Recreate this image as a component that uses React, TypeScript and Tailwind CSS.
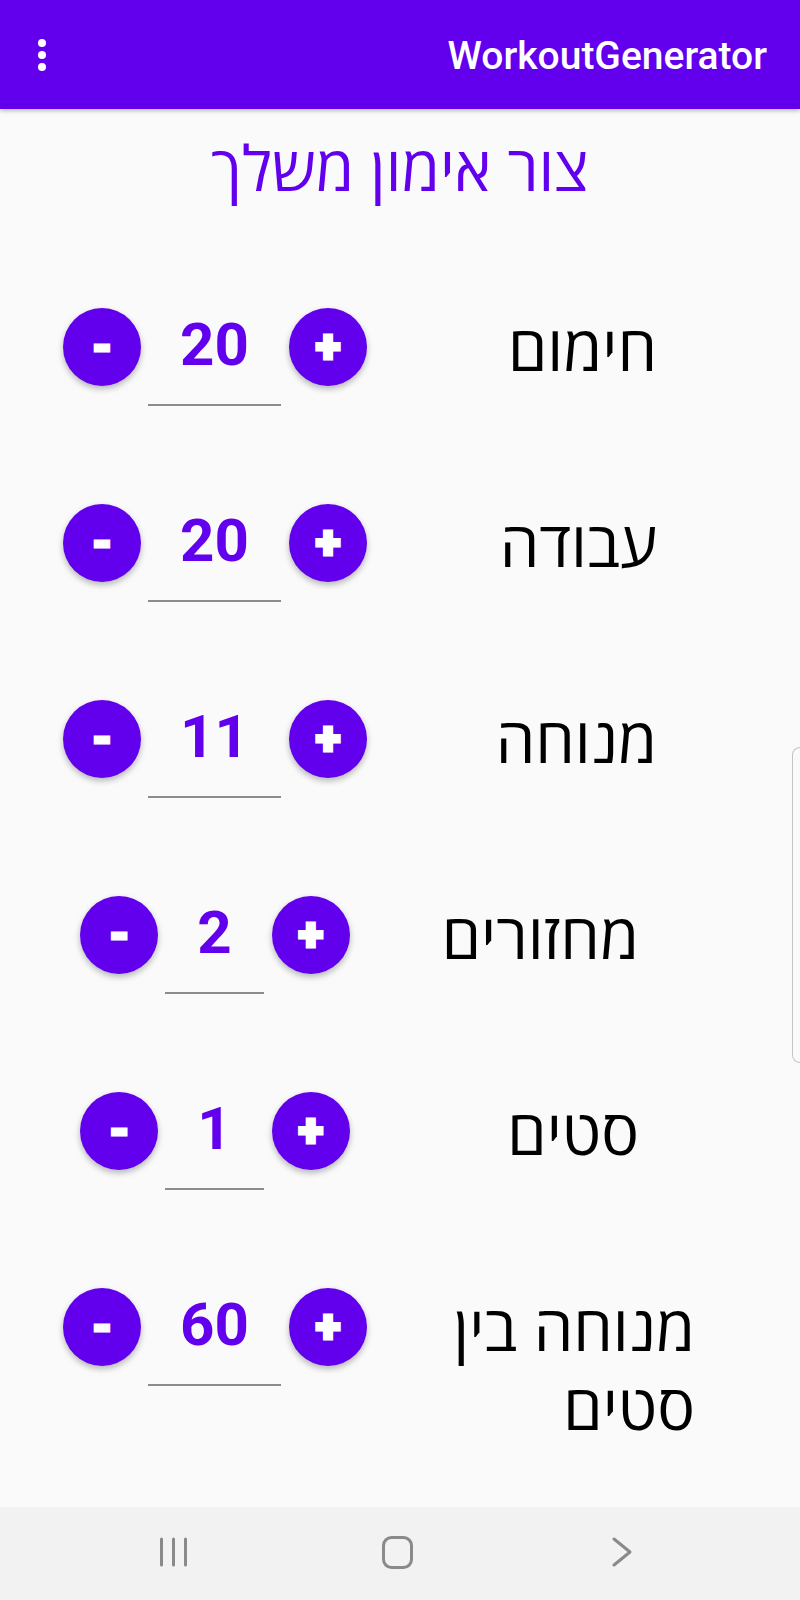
import React from "react";

type Row = {
  label: React.ReactNode;
  value: string;
  labelPad: string;
  rowH: string;
};

const rows: Row[] = [
  { label: "חימום", value: "20", labelPad: "pr-[143px]", rowH: "h-[196px]" },
  { label: "עבודה", value: "20", labelPad: "pr-[143px]", rowH: "h-[196px]" },
  { label: "מנוחה", value: "11", labelPad: "pr-[143px]", rowH: "h-[196px]" },
  { label: "מחזורים", value: "2", labelPad: "pr-[161px]", rowH: "h-[196px]" },
  { label: "סטים", value: "1", labelPad: "pr-[161px]", rowH: "h-[196px]" },
  {
    label: (
      <>
        מנוחה בין
        <br />
        סטים
      </>
    ),
    value: "60",
    labelPad: "pr-[105px]",
    rowH: "h-[200px]",
  },
];

function RoundButton({ children }: { children: React.ReactNode }) {
  return (
    <div className="w-[78px] h-[78px] shrink-0 rounded-full bg-[#6200ee] shadow-[0_3px_6px_rgba(0,0,0,0.28)] flex items-center justify-center text-white font-['Roboto',sans-serif] font-black text-[46px] leading-none [-webkit-text-stroke:3px_white] pb-[2px]">
      {children}
    </div>
  );
}

function StepRow({ row }: { row: Row }) {
  return (
    <div className={`flex items-start ${row.rowH}`}>
      <div className="w-[430px] flex justify-center items-start pt-[59px]">
        <RoundButton>-</RoundButton>
        <div className="flex flex-col ml-[7px] mr-[8px]">
          <div className="h-[78px] px-[32px] pb-[5px] flex items-center justify-center text-[60px] font-bold leading-none text-[#6200ee] font-['Roboto',sans-serif]">
            {row.value}
          </div>
          <div className="h-[2px] mt-[18px] bg-[#8c8c8c]" />
        </div>
        <RoundButton>+</RoundButton>
      </div>
      <div className={`flex-1 flex justify-end pt-[59px] ${row.labelPad}`}>
        <div
          dir="rtl"
          className="text-right text-[63px] leading-[79px] -mt-[1px] text-black font-['Open_Sans','DejaVu_Sans',sans-serif]"
        >
          {row.label}
        </div>
      </div>
    </div>
  );
}

export default function App() {
  return (
    <div className="relative w-[800px] h-[1600px] bg-[#fafafa] flex flex-col overflow-hidden">
      <div className="h-[109px] shrink-0 bg-[#6200ee] shadow-[0_2px_4px_rgba(0,0,0,0.25)] flex items-center justify-between pl-[38px] pr-[33px] z-10">
        <div className="flex flex-col gap-[4px]">
          <div className="w-[8px] h-[8px] rounded-full bg-white" />
          <div className="w-[8px] h-[8px] rounded-full bg-white" />
          <div className="w-[8px] h-[8px] rounded-full bg-white" />
        </div>
        <div className="text-white text-[39px] font-medium font-['Roboto',sans-serif] leading-none pt-[3px]">
          WorkoutGenerator
        </div>
      </div>

      <div className="h-[140px] shrink-0 flex justify-center pt-[18px]">
        <div
          dir="rtl"
          className="h-[80px] text-[62px] leading-[80px] text-[#6200ee] font-['Open_Sans','DejaVu_Sans',sans-serif]"
        >
          צור אימון משלך
        </div>
      </div>

      <div className="flex flex-col">
        {rows.map((r, i) => (
          <StepRow key={i} row={r} />
        ))}
      </div>

      <div className="flex-1" />

      <div className="h-[93px] shrink-0 bg-[#f2f2f2] flex items-center justify-center">
        <svg width="800" height="93" viewBox="0 0 800 93" className="block">
          <g stroke="#8a8a8a" strokeWidth="3" strokeLinecap="round" fill="none">
            <line x1="161.5" y1="32" x2="161.5" y2="58" />
            <line x1="173.5" y1="32" x2="173.5" y2="58" />
            <line x1="185.5" y1="32" x2="185.5" y2="58" />
            <rect x="383.5" y="30.5" width="28" height="30" rx="8" />
            <polyline points="614,32 630,45 614,58" strokeLinejoin="round" />
          </g>
        </svg>
      </div>

      <div className="absolute right-0 top-[747px] h-[316px] w-[8px] border border-r-0 border-[#c4c4c4] rounded-l-[8px]" />
    </div>
  );
}
